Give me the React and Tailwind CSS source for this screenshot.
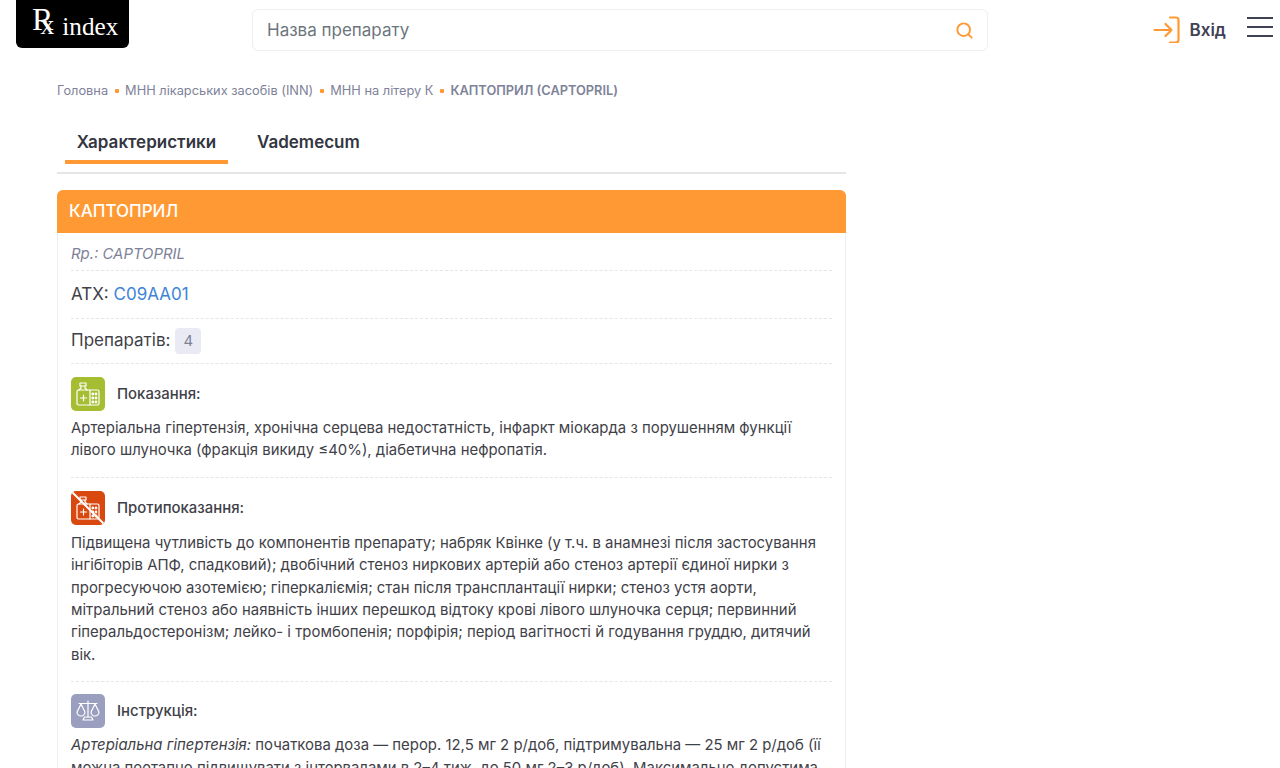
import React from "react";
import { Search } from "lucide-react";

function Bottle() {
  return (
    <g fill="none" stroke="#fff" strokeWidth="1.2" strokeLinejoin="round" strokeLinecap="round">
      <path d="M9 6h6v3H9z" />
      <path d="M10 9v2l-2 2M14 9v2l2 2" />
      <rect x="6" y="13" width="22" height="15" rx="1.5" />
      <path d="M9.5 21h6M12.5 18v6" />
      <path d="M19 13v15" />
      <circle cx="21.8" cy="17" r="0.8" />
      <circle cx="25" cy="17" r="0.8" />
      <circle cx="21.8" cy="21" r="0.8" />
      <circle cx="25" cy="21" r="0.8" />
      <circle cx="21.8" cy="25" r="0.8" />
      <circle cx="25" cy="25" r="0.8" />
    </g>
  );
}

function IconBox({ color, children }) {
  return (
    <div className={`w-[34px] h-[34px] rounded-[5px] shrink-0 overflow-hidden ${color}`}>
      <svg viewBox="0 0 34 34" width="34" height="34">{children}</svg>
    </div>
  );
}

function SectionTitle({ icon, title }) {
  return (
    <div className="flex items-center gap-[12px]">
      {icon}
      <span className="text-[14.92px] font-medium text-[#3f4148]">{title}</span>
    </div>
  );
}

const Dot = () => <span className="w-[4px] h-[4px] bg-[#ff9933] rounded-[1px] mx-[6.5px] mt-[1px]" />;

export default function App() {
  return (
    <div className="h-screen overflow-hidden bg-white font-['Inter',sans-serif] text-[#212529]">
      <header className="flex items-start h-[60px] relative">
        <div className="ml-[16px] w-[113px] h-[48px] bg-black rounded-b-[6px] text-white font-['Liberation_Serif',serif] flex items-start pl-[16px] shrink-0 overflow-hidden">
          <span className="text-[32px] leading-none mt-[3px]">R</span>
          <span className="text-[28px] leading-none mt-[11px] -ml-[13px]">x</span>
          <span className="text-[25.2px] leading-none mt-[14px] ml-[8px]">index</span>
        </div>
        <div className="ml-[123px] mt-[9px] w-[736px] h-[42px] border border-[#eceef1] rounded-[6px] flex items-center pl-[14px] pr-[13px] justify-between">
          <span className="text-[17px] text-[#6c757d] pt-px">Назва препарату</span>
          <Search size={19} strokeWidth={2.4} className="text-[#ff9933]" />
        </div>
        <div className="ml-auto mr-[7px] mt-[15px] flex items-center">
          <svg width="28" height="28" viewBox="0 0 28 28" fill="none" stroke="#ff9933" strokeWidth="2.2" strokeLinecap="round" strokeLinejoin="round">
            <path d="M1.5 15h17M12.5 9l6 6-6 6" />
            <path d="M17 2.5h6a2.5 2.5 0 0 1 2.5 2.5v20a2.5 2.5 0 0 1-2.5 2.5h-6" />
          </svg>
          <span className="ml-[9px] mt-[3px] text-[17px] font-semibold text-[#3f4254]">Вхід</span>
          <div className="ml-[21px] mb-[5px] w-[26px] flex flex-col gap-[6.5px]">
            <div className="h-[2.5px] bg-[#3f4254]" />
            <div className="h-[2.5px] bg-[#3f4254]" />
            <div className="h-[2.5px] bg-[#3f4254]" />
          </div>
        </div>
      </header>

      <main className="pl-[57px] w-[846px]">
        <nav className="mt-[22px] h-[17px] flex items-center text-[12.8px] text-[#7e8299]">
          <span>Головна</span><Dot />
          <span>МНН лікарських засобів (INN)</span><Dot />
          <span>МНН на літеру К</span><Dot />
          <span className="font-semibold">КАПТОПРИЛ (CAPTOPRIL)</span>
        </nav>

        <div className="mt-[23px] h-[52px] border-b-2 border-[#e4e6e8] flex pl-[8px] items-start">
          <div className="w-[163px] h-[42px] border-b-4 border-[#ff9933] flex justify-center pt-[8px] text-[17px] font-semibold text-[#33363f] leading-[24px]">Характеристики</div>
          <div className="ml-[17px] pt-[8px] pl-[12px] text-[17px] font-semibold text-[#33363f] leading-[24px]">Vademecum</div>
        </div>

        <section className="mt-[16px] border border-[#eceef1] rounded-[6px]">
          <div className="h-[43px] -m-px bg-[#ff9933] rounded-t-[6px] pl-[12px] pt-px flex items-center text-[17px] font-medium text-white">КАПТОПРИЛ</div>
          <div className="px-[13px]">
            <div className="h-[39px] pt-[7px] flex items-center border-b border-dashed border-[#e4e6e8] text-[14.92px] italic text-[#7e8299]">Rp.: CAPTOPRIL</div>
            <div className="h-[48px] flex items-center border-b border-dashed border-[#e4e6e8] text-[17px] text-[#3f4148]">
              АТХ:&nbsp;<span className="text-[#3d84d6]">C09AA01</span>
            </div>
            <div className="h-[45px] flex items-center border-b border-dashed border-[#e4e6e8] text-[17px] text-[#3f4148]">
              Препаратів:
              <span className="ml-[5px] w-[26px] h-[26px] rounded-[4px] bg-[#e9eaf3] flex items-center justify-center text-[14.92px] text-[#7e8299]">4</span>
            </div>

            <div className="pt-[13px] pb-[15px] border-b border-dashed border-[#e4e6e8]">
              <SectionTitle title="Показання:" icon={<IconBox color="bg-[#a5bd31]"><Bottle /></IconBox>} />
              <p className="mt-[6px] text-[14.92px] leading-[22.4px] text-[#3f4148]">
                Артеріальна гіпертензія, хронічна серцева недостатність, інфаркт міокарда з порушенням функції лівого шлуночка (фракція викиду ≤40%), діабетична нефропатія.
              </p>
            </div>

            <div className="pt-[13px] pb-[15px] border-b border-dashed border-[#e4e6e8]">
              <SectionTitle title="Протипоказання:" icon={
                <IconBox color="bg-[#d9480f]">
                  <Bottle />
                  <path d="M1 1L33 33" stroke="#fff" strokeWidth="2" />
                </IconBox>
              } />
              <p className="mt-[7px] text-[14.92px] leading-[22.4px] text-[#3f4148]">
                Підвищена чутливість до компонентів препарату; набряк Квінке (у т.ч. в анамнезі після застосування інгібіторів АПФ, спадковий); двобічний стеноз ниркових артерій або стеноз артерії єдиної нирки з прогресуючою азотемією; гіперкаліємія; стан після трансплантації нирки; стеноз устя аорти, мітральний стеноз або наявність інших перешкод відтоку крові лівого шлуночка серця; первинний гіперальдостеронізм; лейко- і тромбопенія; порфірія; період вагітності й годування груддю, дитячий вік.
              </p>
            </div>

            <div className="pt-[12px]">
              <SectionTitle title="Інструкція:" icon={
                <IconBox color="bg-[#9a9fbf]">
                  <g fill="none" stroke="#fff" strokeWidth="1.2" strokeLinecap="round" strokeLinejoin="round">
                    <path d="M17 7v16M8 9.5h18" />
                    <path d="M12 26h10l-1.5-3h-7z" />
                    <path d="M10 10l-4 8a4 4 0 0 0 8 0zM24 10l-4 8a4 4 0 0 0 8 0z" />
                  </g>
                </IconBox>
              } />
              <p className="mt-[6px] text-[14.92px] leading-[22.4px] text-[#3f4148]">
                <em>Артеріальна гіпертензія:</em> початкова доза — перор. 12,5 мг 2 р/доб, підтримувальна — 25 мг 2 р/доб (її можна поетапно підвищувати з інтервалами в 2–4 тиж. до 50 мг 2–3 р/доб). Максимально допустима
              </p>
            </div>
          </div>
        </section>
      </main>
    </div>
  );
}
